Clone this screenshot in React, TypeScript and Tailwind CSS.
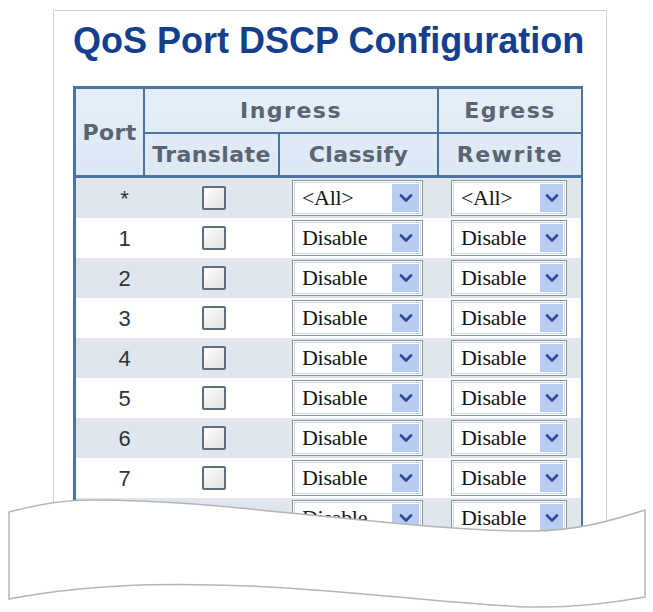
import React from "react";

const rows = ["*", "1", "2", "3", "4", "5", "6", "7", "8"];

function Chevron() {
  return (
    <svg width="14" height="10" viewBox="0 0 14 10">
      <polyline points="2,2.5 7,7.5 12,2.5" fill="none" stroke="#2f4f9c" strokeWidth="2.8" strokeLinecap="round" strokeLinejoin="round" />
    </svg>
  );
}

function Select({ value, width, arrow }: { value: string; width: string; arrow: string }) {
  return (
    <div className={`${width} h-[36px] border border-[#8494a6] bg-white flex items-stretch p-[1px]`}>
      <div className="flex-1 flex items-stretch border border-[#cfd7e1] pr-[1px] py-[1px]">
        <div className="flex-1 flex items-center pl-[7px] text-[22px] leading-none text-[#151515] [font-family:'Liberation_Serif',serif] tracking-[-0.3px]">
          {value}
        </div>
        <div className={`${arrow} bg-[#b9cdf2] flex items-center justify-center`}>
          <Chevron />
        </div>
      </div>
    </div>
  );
}

export default function App() {
  return (
    <div className="relative w-[653px] h-[612px] overflow-hidden bg-white">
      <div className="ml-[53px] mt-[10px] w-[554px] h-[560px] border border-[#d2d2d2] overflow-hidden pl-[19px] pt-[12px]">
        <h1 className="text-[36px] leading-none font-bold text-[#143e8e] [font-family:'Liberation_Sans',Arial,sans-serif]">
          QoS Port DSCP Configuration
        </h1>
        <div className="mt-[27px] w-[510px] border-t-[3px] border-l-[3px] border-r-[2px] border-[#4b74a0]">
          <div className="grid grid-cols-[67px_135px_159px_144px] grid-rows-[45px_41px] border-b-[3px] border-[#4b74a0] bg-gradient-to-b from-[#e6eff9] to-[#dce8f5] text-[22px] font-bold text-[#5b6572] [font-family:'DejaVu_Sans',Verdana,sans-serif] tracking-[0.4px]">
            <div className="row-span-2 flex items-center justify-center">Port</div>
            <div className="col-span-2 border-l-2 border-b-2 border-[#4b74a0] flex items-center justify-center tracking-[1.5px]">Ingress</div>
            <div className="border-l-2 border-b-2 border-[#4b74a0] flex items-center justify-center tracking-[1.5px]">Egress</div>
            <div className="border-l-2 border-[#4b74a0] flex items-center justify-center">Translate</div>
            <div className="border-l-2 border-[#4b74a0] flex items-center justify-center">Classify</div>
            <div className="border-l-2 border-[#4b74a0] flex items-center justify-center tracking-[1.5px]">Rewrite</div>
          </div>
          {rows.map((r, i) => (
            <div
              key={r}
              className={`grid grid-cols-[67px_135px_159px_144px] h-[40px] ${i % 2 === 0 ? "bg-[#dfe6ee]" : "bg-white"}`}
            >
              <div className="flex items-center justify-center pl-[30px] text-[22px] text-[#333] [font-family:'Liberation_Sans',Arial,sans-serif]">
                {r}
              </div>
              <div className="flex items-center justify-center pl-[6px]">
                <div className="w-[24px] h-[24px] border-2 border-[#5f6e7e] rounded-[2px] bg-gradient-to-br from-white via-[#f1eeee] to-[#e2e2e2]" />
              </div>
              <div className="flex items-center justify-center">
                <Select value={i === 0 ? "<All>" : "Disable"} width="w-[131px]" arrow="w-[27px]" />
              </div>
              <div className="flex items-center justify-center">
                <Select value={i === 0 ? "<All>" : "Disable"} width="w-[116px]" arrow="w-[23px]" />
              </div>
            </div>
          ))}
        </div>
      </div>
      <svg className="absolute left-0 top-0" width="653" height="612" viewBox="0 0 653 612">
        <path
          d="M 9 512 C 35 505, 60 500, 90 500 C 170 500, 240 508, 320 516 C 400 524, 470 531, 530 531 C 580 531, 620 518, 645 510 L 645 597 C 612 603, 575 608, 530 607 C 450 604, 350 590, 250 586 C 180 583, 120 584, 70 590 C 40 593, 20 597, 9 599 Z"
          fill="#ffffff"
          stroke="#b5b5b5"
          strokeWidth="1.5"
        />
      </svg>
    </div>
  );
}
